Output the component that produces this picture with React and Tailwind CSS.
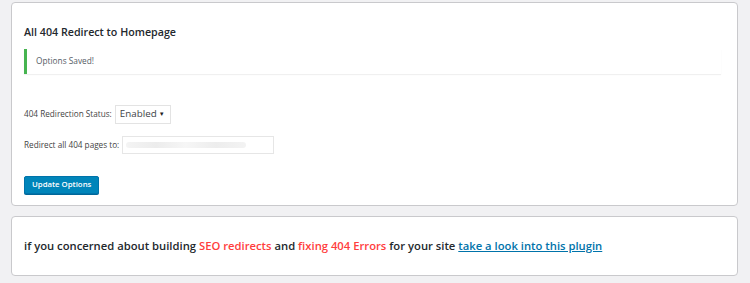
import React from "react"

export default function App() {
  return (
    <div
      className="w-[750px] h-[283px] bg-[#f1f1f3] pt-[2px] pl-[11px] overflow-hidden"
      style={{ fontFamily: '"Open Sans", "Noto Sans", sans-serif' }}
    >
      {/* Settings card */}
      <div className="w-[727px] h-[204px] bg-white border border-[#c9c9cc] rounded-[4px] pl-[12px] pr-[16px] pt-[20px]">
        <h2 className="text-[10.7px] font-semibold text-[#23282d] leading-[18px]">
          All 404 Redirect to Homepage
        </h2>

        {/* Notice */}
        <div className="mt-[8px] h-[25px] border-l-[3px] border-[#46b450] bg-white shadow-[0_1px_1px_rgba(0,0,0,0.06)] flex items-center pl-[9px]">
          <p className="text-[8.3px] text-[#555d66]">Options Saved!</p>
        </div>

        {/* Form */}
        <div className="mt-[31px] flex items-center h-[19px] gap-[3px]">
          <span className="text-[8.2px] text-[#444]">404 Redirection Status:</span>
          <div className="w-[56px] h-[19px] border border-[#e3e3e3] bg-white flex items-center justify-between pl-[4px] pr-[5px]">
            <span className="text-[9.8px] text-[#3c4146]">Enabled</span>
            <span className="text-[6px] text-[#222]">▼</span>
          </div>
        </div>

        <div className="mt-[12px] flex items-center h-[18px] gap-[3px]">
          <span className="text-[8.2px] text-[#444]">Redirect all 404 pages to:</span>
          <div className="w-[152px] h-[18px] border border-[#e6e6e6] bg-white flex items-center px-[3px]">
            <div className="h-[6px] w-[120px] bg-[linear-gradient(90deg,#f4f4f4,#ececec,#f6f6f6,#ededed,#f3f3f3)] rounded-sm" />
          </div>
        </div>

        <button className="mt-[22px] h-[18px] px-[7px] bg-[#0085ba] border border-[#0073aa] rounded-[2px] text-white text-[7.8px] font-semibold leading-none shadow-[0_1px_0_#006799]">
          Update Options
        </button>
      </div>

      {/* Promo card */}
      <div className="mt-[10px] w-[727px] h-[60px] bg-white border border-[#c9c9cc] rounded-[4px] pl-[12px] flex items-center">
        <p className="text-[11.25px] font-semibold text-[#23282d]">
          if you concerned about building{" "}
          <span className="text-[#ff3d3d]">SEO redirects</span> and{" "}
          <span className="text-[#ff3d3d]">fixing 404 Errors</span> for your site{" "}
          <a href="#" className="text-[#0073aa] underline">
            take a look into this plugin
          </a>
        </p>
      </div>
    </div>
  )
}
